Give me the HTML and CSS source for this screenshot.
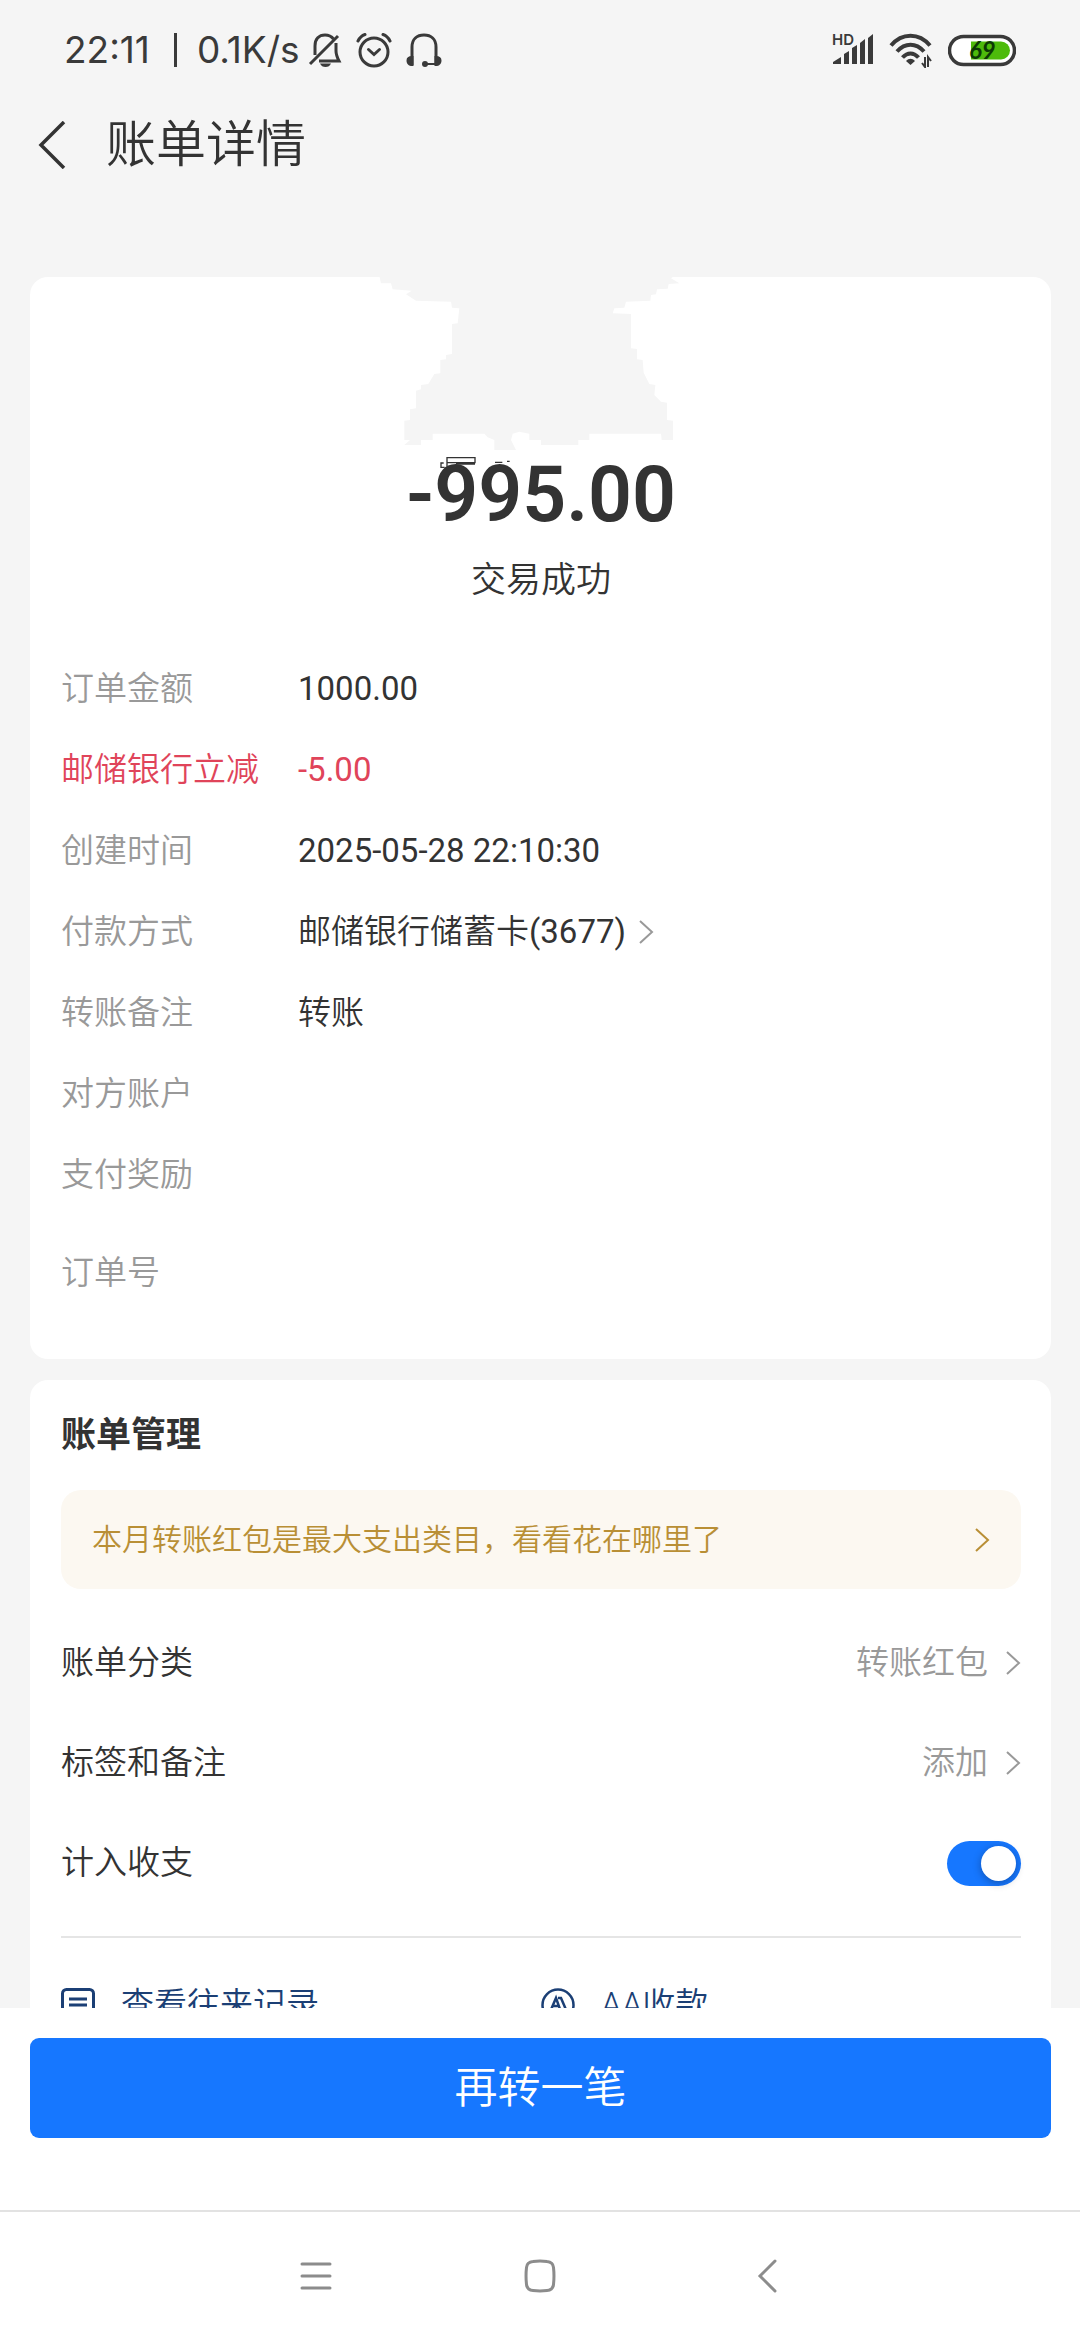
FILE: index.html
```html
<!DOCTYPE html>
<html lang="zh-CN">
<head>
<meta charset="utf-8">
<meta name="viewport" content="width=device-width">
<title>账单详情</title>
<link rel="stylesheet" href="styles.css">
</head>
<body>
<div class="status-bar">
  <span class="clock">22:11</span>
  <span class="separator"></span>
  <span class="speed">0.1K/s</span>
  <svg class="status-icon bell" width="34" height="36" viewBox="0 0 34 36" fill="none" stroke="#3a3a3a" stroke-width="3">
    <path d="M7 23V14C7 7 11 3 17 3c4 0 7 2 8.500 4"/>
    <path d="M2 32L30 4"/>
    <path d="M28 11v8c0 4 1.500 7 3 10H11"/>
    <path d="M12 31.500h11c-1 2.500-3 3.500-5.500 3.500S13 34 12 31.500z" fill="#3a3a3a" stroke="none"/>
  </svg>
  <svg class="status-icon" width="36" height="36" viewBox="0 0 36 36" fill="none" stroke="#3a3a3a" stroke-width="3" stroke-linecap="round">
    <circle cx="18" cy="20" r="14"/>
    <path d="M12.500 17.500L18 22.500l5.500-5"/>
    <path d="M2 9C3.500 6 6 3.500 9 2.500M34 9C32.500 6 30 3.500 27 2.500"/>
  </svg>
  <svg class="status-icon" width="36" height="36" viewBox="0 0 36 36" fill="none" stroke="#3a3a3a" stroke-width="3">
    <path d="M6 33V15C6 7 11 3 18 3s12 4 12 12v18"/>
    <path d="M19 32h11" stroke-width="2"/>
    <circle cx="19" cy="32" r="3" fill="#3a3a3a" stroke="none"/>
    <path d="M7.500 34C3 34.500.500 32 .500 28.500S3 23.500 7.500 24zM28.500 34c4.500.500 7-2 7-5.500s-2.500-5-7-4.500z" fill="#3a3a3a" stroke="none"/>
  </svg>
  <div class="status-right">
    <svg class="signal" width="42" height="36" viewBox="0 0 42 36" fill="#3a3a3a">
      <text class="hd" x="0" y="13">HD</text>
      <path d="M1 32v-2l8-5v7zM12 32V22l5-3v13zM20 32V16l5-3v19zM28 32V11l5-4v25zM36 32V6l5-4v30z"/>
    </svg>
    <svg width="44" height="36" viewBox="0 0 44 36" fill="none" stroke="#3a3a3a" stroke-width="4">
      <path d="M2 13.500c11-13 28-13 39 0M8 19.500c8-9 19-9 27 0M13.500 25.500c5-5.500 11-5.500 16 0"/>
      <path d="M17 29c3-3 6-3 9 0l-4.500 4z" fill="#3a3a3a" stroke="none"/>
      <path d="M36 25v10l-3-4M39 35V25l3 4" stroke-width="2"/>
    </svg>
    <svg width="68" height="36" viewBox="0 0 68 36">
      <rect x="1.500" y="4.500" width="65" height="28" rx="14" fill="#fff" stroke="#3a3a3a" stroke-width="3.500"/>
      <path d="M23 9.500h30a9 9 0 0 1 0 18H23z" fill="#4dbb0b"/>
      <text class="battery-level" x="21" y="27">69</text>
    </svg>
  </div>
</div>

<header class="page-header">
  <button class="back" type="button" aria-label="返回">
    <svg width="30" height="48" viewBox="0 0 30 48" fill="none" stroke="#333" stroke-width="3.500"><path d="M27 1L4 24l23 23"/></svg>
  </button>
  <h1 class="page-title">账单详情</h1>
</header>

<main class="content">
  <section class="card summary">
    <svg class="mask" width="400" height="180" viewBox="0 51 1200 540" aria-hidden="true">
      <path fill="#f5f5f5" d="M115 48L120 70 150 70 155 88 212 92 195 103 225 122 330 125 333 143 355 145 350 190 333 192 333 282 315 285 315 298 298 300 298 340 280 342 262 372 240 375 240 388 225 392 225 445 207 448 207 480 190 482 190 540 207 540 190 555 240 555 240 540 275 540 275 521 430 521 440 532 460 540 460 570 525 570 510 540 515 521 535 515 565 521 565 540 600 540 600 555 712 555 712 540 745 540 745 521 960 521 962 540 996 540 996 482 978 480 978 428 960 425 940 405 943 375 925 372 908 338 905 300 888 298 888 267 870 265 870 162 815 160 820 145 850 143 855 125 928 122 930 105 945 103 948 88 980 86 983 72 1015 70 990 55 1000 48Z"/>
      <path fill="none" stroke="#333" stroke-width="4" d="M318 620V593H402V608H320M402 612H345M308 609H300V622H311M462 607H484M498 604H506"/>
    </svg>
    <p class="amount">-995.00</p>
    <p class="state">交易成功</p>
    <dl class="details">
      <dt>订单金额</dt><dd class="number">1000.00</dd>
      <dt class="discount">邮储银行立减</dt><dd class="number discount">-5.00</dd>
      <dt>创建时间</dt><dd class="number">2025-05-28 22:10:30</dd>
      <dt>付款方式</dt>
      <dd><a class="pay-link" href="#card"><span>邮储银行储蓄卡<span class="number">(3677)</span></span><svg class="chevron" width="16" height="24" viewBox="0 0 16 24"><path d="M2 1l12 11L2 23"/></svg></a></dd>
      <dt>转账备注</dt><dd>转账</dd>
      <dt>对方账户</dt><dd></dd>
      <dt>支付奖励</dt><dd></dd>
      <dt class="order-number">订单号</dt><dd></dd>
    </dl>
  </section>

  <section class="card manage">
    <h2 class="section-title">账单管理</h2>
    <a class="banner" href="#stats">本月转账红包是最大支出类目，看看花在哪里了<svg class="chevron" width="16" height="24" viewBox="0 0 16 24"><path d="M2 1l12 11L2 23"/></svg></a>
    <a class="row" href="#category"><span>账单分类</span><span class="row-value">转账红包<svg class="chevron" width="16" height="24" viewBox="0 0 16 24"><path d="M2 1l12 11L2 23"/></svg></span></a>
    <a class="row" href="#tags"><span>标签和备注</span><span class="row-value">添加<svg class="chevron" width="16" height="24" viewBox="0 0 16 24"><path d="M2 1l12 11L2 23"/></svg></span></a>
    <label class="row"><span>计入收支</span><input class="switch" type="checkbox" role="switch" checked></label>
    <div class="links">
      <a class="link" href="#records">
        <svg width="34" height="34" viewBox="0 0 34 34" fill="none" stroke="#1b3f75" stroke-width="3"><rect x="1.500" y="1.500" width="31" height="31" rx="4"/><path d="M8 11h18M8 17h18"/></svg>
        查看往来记录
      </a>
      <a class="link" href="#split">
        <svg width="34" height="34" viewBox="0 0 34 34" fill="none" stroke="#1b3f75" stroke-width="2.500"><circle cx="17" cy="17" r="15.500"/><path d="M9 24l6-14 5 14M12 18h6M17 10h3l6 14"/></svg>
        AA收款
      </a>
    </div>
  </section>
</main>

<footer class="action-bar">
  <button class="primary" type="button">再转一笔</button>
</footer>

<nav class="system-nav">
  <button type="button" aria-label="菜单"><svg width="34" height="34" viewBox="0 0 34 34"><path d="M3 5h28M3 17h28M3 29h28"/></svg></button>
  <button type="button" aria-label="主页"><svg width="34" height="34" viewBox="0 0 34 34"><path d="M10 2.500C14 2 20 2 24 2.500q6 .500 6.500 6C31 13 31 21 30.500 25.500q-.500 5.500-6.500 6C20 32 14 32 10 31.500q-6-.500-6.500-6C3 21 3 13 3.500 8.500q.500-5.500 6.500-6z"/></svg></button>
  <button type="button" aria-label="返回"><svg width="34" height="34" viewBox="0 0 34 34"><path d="M28 2L13 17l15 15"/></svg></button>
</nav>
</body>
</html>
```
FILE: styles.css
```css
* { box-sizing: border-box; }

body {
  margin: 0;
  height: 100vh;
  display: flex;
  flex-direction: column;
  background: #f5f5f5;
  color: #333;
  font-family: Roboto, "Noto Sans CJK SC", sans-serif;
  font-size: 33px;
  font-weight: 350;
  line-height: 48px;
}

h1, h2, p, dl, dd { margin: 0; }
a { color: inherit; text-decoration: none; }
button { padding: 0; border: 0; background: none; font: inherit; }
svg { flex: none; display: block; }

.status-bar {
  flex: none;
  display: flex;
  align-items: center;
  height: 100px;
  padding: 0 64px;
  color: #3a3a3a;
  font-family: Inter, sans-serif;
  font-size: 37px;
  font-weight: 400;
}
.separator { width: 3px; height: 34px; margin: 0 20px 0 24px; background: #3a3a3a; }
.status-icon { margin-right: 14px; }
.bell { margin-left: 8px; }
.status-right { display: flex; align-items: center; gap: 15px; margin-left: auto; }
.signal { overflow: visible; }
.hd { font: 600 15px Inter, sans-serif; }
.battery-level { font: italic 700 24px Lato, sans-serif; fill: #0c3a05; }

.page-header {
  flex: none;
  display: flex;
  align-items: center;
  gap: 39px;
  height: 88px;
  padding: 2px 37px 0;
}
.page-title { font-size: 50px; font-weight: 350; line-height: 72px; }

.content {
  flex: 1;
  min-height: 0;
  overflow: hidden;
  display: flex;
  flex-direction: column;
  gap: 21px;
  padding: 89px 29px 0 30px;
}
.card { flex: none; padding: 0 30px 0 31px; border-radius: 18px; background: #fff; }

.summary { padding-bottom: 62px; }
.mask { margin: 0 auto; overflow: visible; }
.amount { font-size: 77px; font-weight: 600; line-height: 76px; text-align: center; }
.state { margin-top: 24px; font-size: 35px; text-align: center; }

.details {
  display: grid;
  grid-template-columns: 237px 1fr;
  row-gap: 33px;
  margin-top: 60px;
}
dt { color: #999; }
.number { font-weight: 400; }
.details .discount { color: #e0445a; }
.order-number { margin-top: 17px; }
.pay-link { display: flex; align-items: center; gap: 12px; }

.chevron { fill: none; stroke: #999; stroke-width: 2; }

.manage { padding-top: 32px; }
.section-title { font-size: 35px; font-weight: 700; line-height: 48px; }
.banner {
  display: flex;
  align-items: center;
  justify-content: space-between;
  height: 99px;
  margin: 30px 0 24px;
  padding: 0 31px;
  border-radius: 20px;
  background: #fcf8f1;
  color: #b98f35;
  font-size: 30px;
}
.banner .chevron { stroke: #b98f35; }
.row { display: flex; align-items: center; justify-content: space-between; height: 100px; }
.row-value { display: flex; align-items: center; gap: 17px; color: #999; }

.switch {
  appearance: none;
  display: flex;
  justify-content: flex-end;
  width: 74px;
  height: 45px;
  margin: 0;
  padding: 5px;
  border-radius: 23px;
  background: #1677ff;
}
.switch::before {
  content: "";
  width: 35px;
  height: 35px;
  border-radius: 50%;
  background: #fff;
  box-shadow: 0 2px 8px rgba(0, 0, 0, 0.3);
}
.switch:not(:checked) { justify-content: flex-start; background: #ccc; }

.links {
  display: grid;
  grid-template-columns: 1fr 1fr;
  margin-top: 23px;
  padding: 43px 0;
  border-top: 2px solid #e5e5e5;
  color: #1b3f75;
}
.link { display: flex; align-items: center; gap: 26px; }

.action-bar { flex: none; padding: 30px 29px 72px 30px; background: #fff; }
.primary {
  display: block;
  width: 100%;
  height: 100px;
  border-radius: 9px;
  background: #1677ff;
  color: #fff;
  font-size: 43px;
}

.system-nav {
  flex: none;
  display: flex;
  justify-content: center;
  gap: 190px;
  height: 130px;
  border-top: 2px solid #e2e2e2;
  background: #fff;
}
.system-nav svg { fill: none; stroke: #8c8c8c; stroke-width: 3; stroke-linecap: round; }
```
